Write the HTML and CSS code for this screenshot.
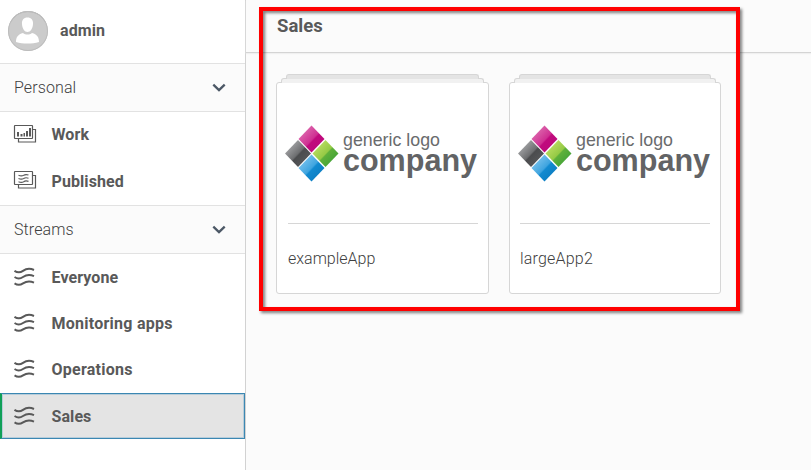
FILE: index.html
```html
<!DOCTYPE html>
<html lang="en">
<head>
<meta charset="utf-8">
<title>Hub</title>
<link rel="stylesheet" href="styles.css">
</head>
<body>
<svg class="defs" width="0" height="0" aria-hidden="true">
  <defs>
    <linearGradient id="pink" x1="0" y1="0" x2="1" y2="1"><stop offset=".2" stop-color="#dc65ac"/><stop offset=".52" stop-color="#cf2f92"/><stop offset=".56" stop-color="#c00a7d"/><stop offset="1" stop-color="#bb087b"/></linearGradient>
    <linearGradient id="gray" x1="0" y1="0" x2="1" y2="1"><stop offset=".2" stop-color="#a0a1a3"/><stop offset=".5" stop-color="#6d6e70"/><stop offset=".54" stop-color="#4b4c4e"/><stop offset="1" stop-color="#5e5f61"/></linearGradient>
    <linearGradient id="green" x1="0" y1="0" x2="1" y2="1"><stop offset=".2" stop-color="#b9dc60"/><stop offset=".5" stop-color="#95ca45"/><stop offset=".54" stop-color="#5eb03a"/><stop offset="1" stop-color="#329a36"/></linearGradient>
    <linearGradient id="blue" x1="0" y1="0" x2="1" y2="1"><stop offset=".2" stop-color="#74c0ec"/><stop offset=".5" stop-color="#3ea4df"/><stop offset=".54" stop-color="#128ad0"/><stop offset="1" stop-color="#0875b9"/></linearGradient>
    <symbol id="stream" viewBox="0 0 22 20">
      <path d="M.5 3.800C3 5.500 6.500 5.500 9 3.800S15 .8 20 3M.5 10C3 11.700 6.500 11.700 9 10S15 7 20 9.200M.5 16.400C3 18.100 6.500 18.100 9 16.400S15 13.400 20 15.600" fill="none" stroke="#595959" stroke-width="2"/>
    </symbol>
    <symbol id="chevron" viewBox="0 0 14 10"><path d="M1.300 1.700 7 7.200l5.700-5.500" fill="none" stroke="#4c5866" stroke-width="2.300"/></symbol>
    <symbol id="logo" viewBox="0 0 194 60">
      <path d="M26.500.5 39.500 14 26.500 27.500 13.500 14z" fill="url(#pink)"/>
      <path d="M13 15 26 28.500 13 42 0 28.500z" fill="url(#gray)"/>
      <path d="M40.500 15 53.500 28.500 40.500 42 27.500 28.500z" fill="url(#green)"/>
      <path d="M26.500 29.500 39.500 43 26.500 56.500 13.500 43z" fill="url(#blue)"/>
      <text class="logo-small" x="58" y="21" textLength="97" lengthAdjust="spacingAndGlyphs">generic logo</text>
      <text class="logo-big" x="58" y="46" textLength="134" lengthAdjust="spacingAndGlyphs">company</text>
    </symbol>
  </defs>
</svg>
<div class="app">
  <nav class="sidebar">
    <div class="user">
      <svg class="avatar" viewBox="0 0 40 40"><circle cx="20" cy="20" r="20" fill="#cbcbcb"/><path d="M3 10.500A19.500 19.500 0 0 1 37 10.500" fill="none" stroke="#b5b5b5"/><circle cx="20" cy="20" r="19.500" fill="none" stroke="#bcbcbc"/><path d="M19.500 6.500c3.800 0 5.800 2.600 5.500 6.500-.3 4.500-2.500 8-5.500 8s-5.200-3.500-5.500-8c-.3-3.900 1.700-6.500 5.500-6.500zM8 31c0-5 2-7.500 7-9 2.500 2 6.500 2 9 0 5 1.500 7 4 7 9-7 2-16 2-23 0z" fill="#fff"/></svg>
      <span>admin</span>
    </div>
    <div class="group">Personal<svg class="chevron"><use href="#chevron"/></svg></div>
    <div class="items personal">
      <div class="item"><svg class="sheet" viewBox="0 0 24 20"><g fill="none" stroke="#595959" stroke-width="1.200"><rect x="1.500" y="1.500" width="18" height="13" rx=".5"/><path d="M19.500 5.500h3v12.500h-17v-3.500"/></g><path d="M4 8h2v4.500h-2zM7.500 10h2v2.500h-2zM10.500 9h1.500v3.500h-1.500zM13 7h2v5.500h-2zM16 4h2v8.500h-2z" fill="#595959"/></svg>Work</div>
      <div class="item"><svg class="sheet" viewBox="0 0 24 20"><g fill="none" stroke="#595959" stroke-width="1.200"><rect x="1.500" y="1.500" width="18" height="13" rx=".5"/><path d="M19.500 5.500h3v12.500h-17v-3.500"/><path d="M5.500 5.300c2.500 1 4 .6 5.200 0 1.300-.9 2.800-1 4.800-.3M5.500 8.500c2.500 1 4 .6 5.200 0 1.300-.9 2.800-1 4.800-.3M5.500 11.700c2.500 1 4 .6 5.200 0 1.300-.9 2.800-1 4.800-.3"/></g></svg>Published</div>
    </div>
    <div class="group">Streams<svg class="chevron"><use href="#chevron"/></svg></div>
    <div class="items">
      <div class="item"><svg class="stream"><use href="#stream"/></svg>Everyone</div>
      <div class="item wide"><svg class="stream"><use href="#stream"/></svg>Monitoring apps</div>
      <div class="item wide"><svg class="stream"><use href="#stream"/></svg>Operations</div>
      <div class="item selected"><svg class="stream"><use href="#stream"/></svg>Sales</div>
    </div>
  </nav>
  <main class="content">
    <h1>Sales</h1>
    <div class="cards">
      <article class="card first"><svg class="logo"><use href="#logo"/></svg><div class="name">exampleApp</div></article>
      <article class="card"><svg class="logo"><use href="#logo"/></svg><div class="name large">largeApp2</div></article>
    </div>
    <div class="highlight"></div>
  </main>
</div>
</body>
</html>
```
FILE: styles.css
```css
* { box-sizing: border-box; }
body { margin: 0; font-family: Roboto, "Liberation Sans", sans-serif; font-size: 16px; color: #595959; overflow: hidden; }
svg { display: block; flex: none; }
.defs { position: absolute; }
.app { display: flex; height: 470px; }
.sidebar { width: 246px; border-right: 1px solid #d2d2d2; background: #fff; }
.user { height: 63px; display: flex; align-items: center; padding: 0 0 2px 8px; gap: 12px; font-weight: 700; letter-spacing: .1px; }
.avatar { width: 40px; height: 40px; }
.group { height: 49px; border: solid #e2e2e2; border-width: 1px 0; background: #fbfbfb; display: flex; align-items: center; justify-content: space-between; padding: 0 19px 0 14px; color: #404040; font-weight: 300; letter-spacing: .1px; }
.chevron { width: 14px; height: 10px; }
.personal { height: 93px; }
.personal .item { height: 46.500px; padding-bottom: 1px; }
.item { height: 46px; display: flex; align-items: center; padding-left: 14px; font-weight: 700; letter-spacing: .08px; }
.item.wide { letter-spacing: .25px; }
.item:nth-child(3) { height: 47px; padding-bottom: 1px; }
.sheet { width: 24px; height: 20px; margin: -2px 14.500px 0 -1px; }
.stream { width: 22px; height: 20px; margin-right: 15.500px; }
.selected { background: #e4e4e4; border: 1px solid #3b87b2; border-left: 2px solid #10a057; box-shadow: inset 0 0 0 1px #b8cdda; padding-left: 12px; }
.content { position: relative; flex: 1; background: #fbfbfb; }
h1 { margin: 0; height: 53px; padding: 15px 0 0 31px; border-bottom: 1px solid #d4d4d4; box-shadow: 0 1px 1px #f0f0f0; font-size: 18.500px; line-height: 22px; font-weight: 700; }
.cards { display: flex; gap: 20px; padding: 29px 0 0 30px; }
.card { position: relative; width: 212px; height: 212px; background: #fff; border: 1px solid #d6d6d6; border-radius: 3px; padding: 42px 9px 0 8px; }
.first { width: 213px; }
.card::before, .card::after { content: ""; position: absolute; border: 1px solid #d6d6d6; border-bottom: 0; border-radius: 3px 3px 0 0; height: 4px; }
.card::before { left: 4px; right: 4px; top: -5px; background: #f1f1f1; }
.card::after { left: 9px; right: 9px; top: -9px; background: #e4e4e4; }
.logo { width: 194px; height: 60px; }
.logo-small { font: 19px "Liberation Sans", sans-serif; fill: #6a6b6d; }
.logo-big { font: 700 32px "Liberation Sans", sans-serif; fill: #626365; }
.name { margin: 38px 0 0 3px; width: 190px; border-top: 1px solid #d6d6d6; padding-top: 25px; line-height: 20px; color: #404040; font-weight: 300; letter-spacing: 0; }
.name.large { margin-left: 2px; letter-spacing: .2px; }
.highlight { position: absolute; left: 13px; top: 7px; width: 481px; height: 304px; border: 4px solid #f00; filter: drop-shadow(2px 2px 1.500px rgba(0, 0, 0, .5)); }
```
